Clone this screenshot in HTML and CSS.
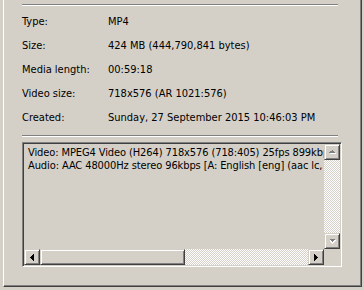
FILE: index.html
```html
<!DOCTYPE html>
<html>
<head>
  <meta charset="UTF-8" />
  <title>Properties</title>
  <link rel="stylesheet" href="styles.css">
</head>
<body>
  <div class="page">
    <div class="rule"></div>

    <div class="props">
      <div class="row"><span class="lbl">Type:</span><span class="val">MP4</span></div>
      <div class="row"><span class="lbl">Size:</span><span class="val">424 MB (444,790,841 bytes)</span></div>
      <div class="row"><span class="lbl">Media length:</span><span class="val">00:59:18</span></div>
      <div class="row"><span class="lbl">Video size:</span><span class="val">718x576 (AR 1021:576)</span></div>
      <div class="row"><span class="lbl">Created:</span><span class="val">Sunday, 27 September 2015 10:46:03 PM</span></div>
    </div>

    <div class="rule"></div>

    <div class="memo">
      <div class="memo-text">
        <div>Video: MPEG4 Video (H264) 718x576 (718:405) 25fps 899kbps</div>
        <div>Audio: AAC 48000Hz stereo 96kbps [A: English [eng] (aac lc, 48000Hz)]</div>
      </div>
      <div class="vscroll">
        <div class="sbtn">
          <svg width="7" height="5" viewBox="0 0 7 5" shape-rendering="crispEdges">
            <path d="M4 1h1v1h1v1h1v1h-6v-1h1v-1h1v-1z" fill="#fff"/>
            <path d="M3 0h1v1h1v1h1v1h-6v-1h1v-1h1z" fill="#808080"/>
          </svg>
        </div>
        <div class="track"></div>
        <div class="sbtn">
          <svg width="7" height="5" viewBox="0 0 7 5" shape-rendering="crispEdges">
            <path d="M1 1h6v1h-1v1h-1v1h-1v1h-1v-1h-1v-1h-1z" fill="#fff"/>
            <path d="M0 0h6v1h-1v1h-1v1h-1v-1h-1v-1h-1z" fill="#808080"/>
          </svg>
        </div>
      </div>
      <div class="hscroll">
        <div class="sbtn">
          <svg width="4" height="7" viewBox="0 0 4 7" shape-rendering="crispEdges">
            <path d="M3 0h1v7h-1v-1h-1v-1h-1v-1h-1v-1h1v-1h1v-1h1z" fill="#000"/>
          </svg>
        </div>
        <div class="track">
          <div class="thumb"></div>
        </div>
        <div class="sbtn">
          <svg width="4" height="7" viewBox="0 0 4 7" shape-rendering="crispEdges">
            <path d="M0 0h1v1h1v1h1v1h1v1h-1v1h-1v1h-1v1h-1z" fill="#000"/>
          </svg>
        </div>
      </div>
      <div class="corner"></div>
    </div>
  </div>
</body>
</html>
```

FILE: styles.css
```css
body {
  margin: 0;
  background: #d4d0c8;
  font-family: "DejaVu Sans Condensed", "DejaVu Sans", sans-serif;
  font-size: 11px;
  color: #000;
}
.page {
  margin-left: 3px;
  width: 339px;
  height: 282px;
  padding: 4px 0 0 18px;
  border-left: 1px solid #fff;
  border-right: 1px solid #404040;
  border-bottom: 1px solid #404040;
  box-shadow: inset -1px -1px 0 #808080;
}
.rule {
  width: 316px;
  border-top: 1px solid #808080;
  border-bottom: 1px solid #fff;
}
.props {
  padding: 4px 0 5px;
}
.row {
  display: flex;
  height: 24px;
  line-height: 24px;
}
.lbl {
  width: 86px;
}
.memo {
  margin-top: 5px;
  width: 316px;
  height: 121px;
  display: grid;
  grid-template-columns: 1fr 16px;
  grid-template-rows: 1fr 16px;
  border: 1px solid;
  border-color: #808080 #fff #fff #808080;
  box-shadow: inset 1px 1px 0 #404040, inset -1px -1px 0 #d4d0c8;
  padding: 1px;
}
.memo-text {
  overflow: hidden;
  white-space: nowrap;
  padding: 2px 0 0 4px;
  line-height: 13px;
  letter-spacing: -0.1px;
}
.vscroll {
  display: flex;
  flex-direction: column;
}
.hscroll {
  display: flex;
}
.sbtn {
  width: 14px;
  height: 14px;
  flex: none;
  display: flex;
  align-items: center;
  justify-content: center;
  border: 1px solid;
  border-color: #d4d0c8 #404040 #404040 #d4d0c8;
  box-shadow: inset 1px 1px 0 #fff, inset -1px -1px 0 #808080;
}
.track {
  flex: 1;
  background: repeating-conic-gradient(#fff 0 25%, #d4d0c8 0 50%) 0 0 / 2px 2px;
}
.thumb {
  width: 143px;
  height: 14px;
  background: #d4d0c8;
  border: 1px solid;
  border-color: #d4d0c8 #404040 #404040 #d4d0c8;
  box-shadow: inset 1px 1px 0 #fff, inset -1px -1px 0 #808080;
}
.corner {
  background: #d4d0c8;
}
```
